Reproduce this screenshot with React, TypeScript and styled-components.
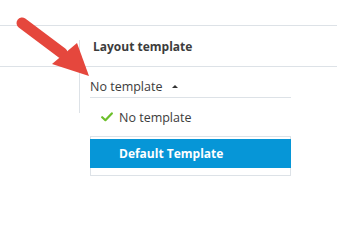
import React from "react";
import styled, { createGlobalStyle } from "styled-components";

const GlobalStyle = createGlobalStyle`
  body {
    margin: 0;
    background: #ffffff;
    font-family: "Open Sans", "Noto Sans", sans-serif;
    color: #3c3c3c;
  }
`;

const Page = styled.div`
  position: relative;
  width: 337px;
  height: 246px;
  overflow: hidden;
  padding-top: 25px;
  box-sizing: border-box;
`;

const HeaderRow = styled.div`
  display: grid;
  grid-template-columns: 79px 1fr;
  height: 42px;
  border-top: 1px solid #dde2e7;
  border-bottom: 1px solid #dde2e7;
  box-sizing: border-box;
`;

const HeaderCell = styled.div`
  position: relative;
  display: flex;
  align-items: center;
  padding-left: 14px;
  font-size: 12px;
  font-weight: 700;
  color: #3c3c3c;

  &::before {
    content: "";
    position: absolute;
    left: 0;
    top: 14px;
    height: 16px;
    border-left: 1px solid #dde2e7;
  }
`;

const BodyRow = styled.div`
  display: grid;
  grid-template-columns: 79px 1fr;
`;

const BodyCell = styled.div`
  position: relative;
  height: 46px;
  border-left: 1px solid #dde2e7;
  padding: 11px 0 0 10px;
  box-sizing: border-box;
`;

const Trigger = styled.div`
  display: flex;
  align-items: center;
  gap: 10px;
  font-size: 12.5px;
  line-height: 18px;
  color: #3c3c3c;
`;

const Caret = styled.span`
  width: 0;
  height: 0;
  border-left: 3px solid transparent;
  border-right: 3px solid transparent;
  border-bottom: 3px solid #333;
  margin-top: -1px;
`;

const Menu = styled.div`
  position: absolute;
  left: 10px;
  top: 30px;
  width: 201px;
  height: 79px;
  box-sizing: border-box;
  border: 1px solid #dde2e7;
  background: #fff;
  display: flex;
  flex-direction: column;
`;

const Item = styled.div<{ $active?: boolean }>`
  display: flex;
  align-items: center;
  gap: 6px;
  margin: 0 -1px;
  padding-left: 11px;
  font-size: ${({ $active }) => ($active ? "12px" : "12.5px")};
  height: ${({ $active }) => ($active ? "29px" : "39px")};
  margin-top: ${({ $active }) => ($active ? "2px" : "0")};
  box-sizing: border-box;
  background: ${({ $active }) => ($active ? "#0696d7" : "#fff")};
  color: ${({ $active }) => ($active ? "#fff" : "#3c3c3c")};
  font-weight: ${({ $active }) => ($active ? 700 : 400)};
  border-bottom: ${({ $active }) => ($active ? "none" : "1px solid #dde2e7")};
`;

const CheckSlot = styled.span`
  width: 12px;
  display: inline-flex;
`;

const ArrowSvg = styled.svg`
  position: absolute;
  left: 0;
  top: 0;
  pointer-events: none;
`;

function Check() {
  return (
    <svg width="12" height="10" viewBox="0 0 12 10">
      <path
        d="M1.2 5.2 L4.4 8.2 L10.8 1.4"
        fill="none"
        stroke="#6cbf2a"
        strokeWidth="2.2"
        strokeLinecap="round"
        strokeLinejoin="round"
      />
    </svg>
  );
}

export default function App() {
  return (
    <Page>
      <GlobalStyle />
      <HeaderRow>
        <div />
        <HeaderCell>Layout template</HeaderCell>
      </HeaderRow>
      <BodyRow>
        <div />
        <BodyCell>
          <Trigger>
            No template <Caret />
          </Trigger>
          <Menu>
            <Item>
              <CheckSlot>
                <Check />
              </CheckSlot>
              No template
            </Item>
            <Item $active>
              <CheckSlot />
              Default Template
            </Item>
          </Menu>
        </BodyCell>
      </BodyRow>
      <ArrowSvg width="337" height="246" viewBox="0 0 337 246">
        <line
          x1="22"
          y1="23"
          x2="62"
          y2="53"
          stroke="#e5473d"
          strokeWidth="11"
          strokeLinecap="round"
        />
        <polygon points="52,64 77,43 89,76" fill="#e5473d" />
      </ArrowSvg>
    </Page>
  );
}
